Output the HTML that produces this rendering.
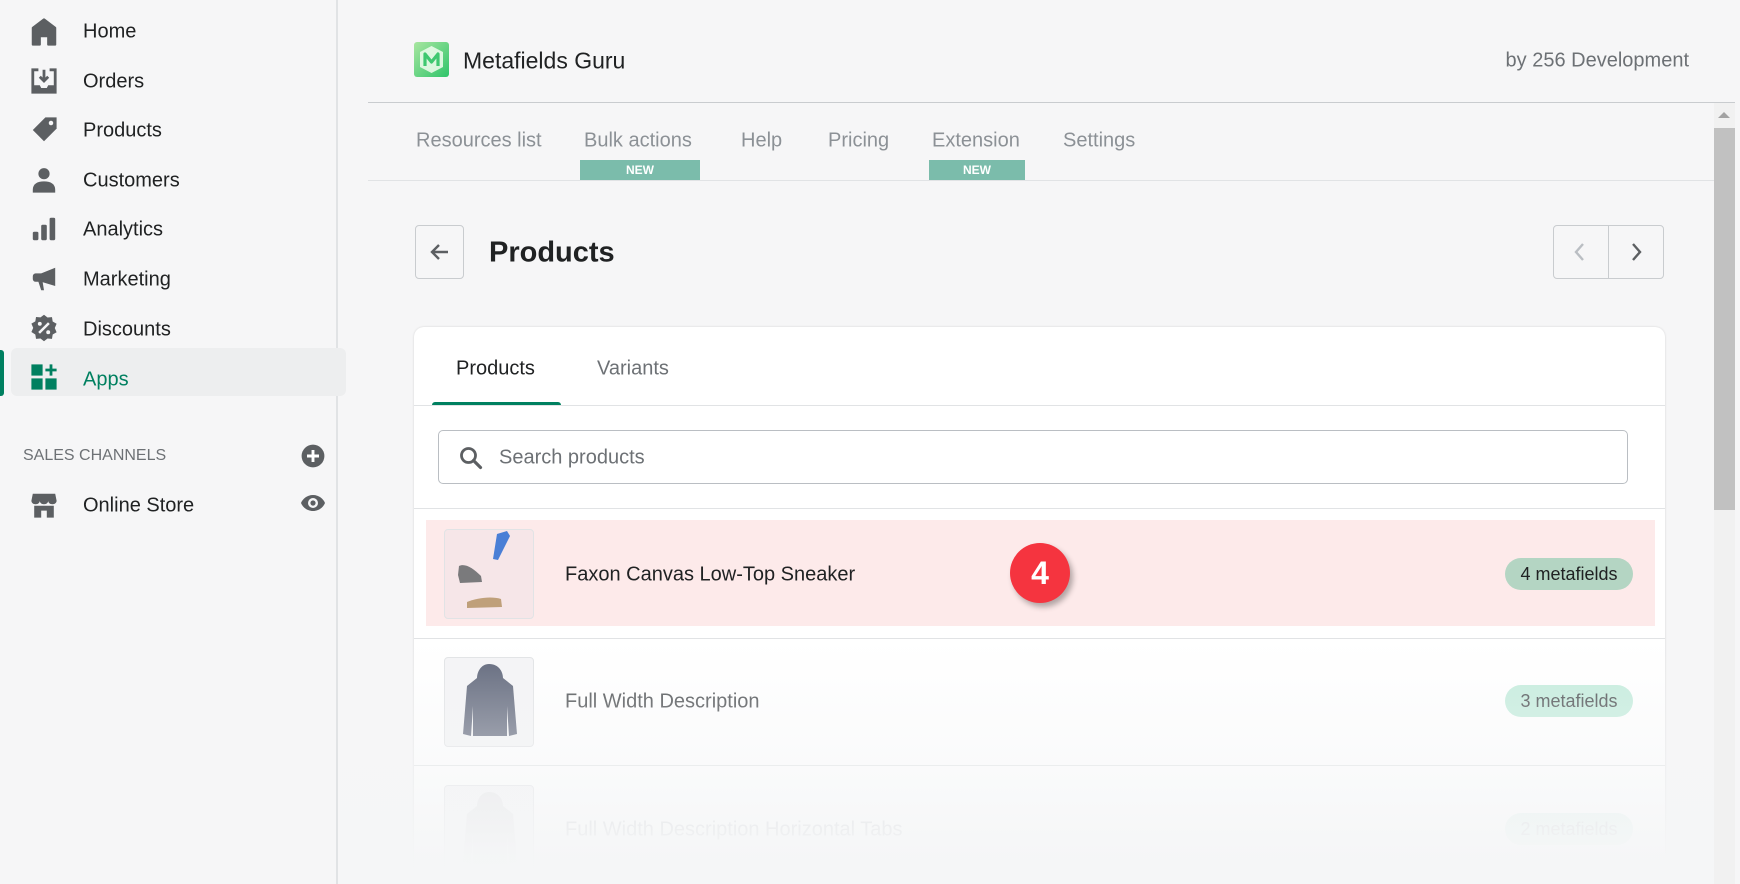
<!DOCTYPE html>
<html><head><meta charset="utf-8"><style>
*{box-sizing:border-box;margin:0;padding:0}
html,body{width:1740px;height:884px;overflow:hidden}
body{background:#f6f6f7;font-family:"Liberation Sans",sans-serif;color:#202223;position:relative}
.abs{position:absolute}
.nav{position:absolute;left:83px;font-size:20px;color:#202223;transform:translateY(-50%)}
.ic{position:absolute;left:30px;width:28px;height:28px;transform:translateY(-50%)}
.tab{position:absolute;top:141px;transform:translateY(-50%);font-size:20px;color:#8c9196}
.new{position:absolute;top:160px;height:20px;background:#7bbcab;color:#fff;font-size:12px;font-weight:bold;text-align:center;line-height:20px}
.row-t{position:absolute;left:565px;font-size:20px;transform:translateY(-50%)}
.badge{position:absolute;left:1505px;width:128px;height:32px;border-radius:16px;font-size:18px;text-align:center;line-height:32px}
.thumb{position:absolute;left:444px;width:90px;height:90px;border:1px solid #e1e3e5;border-radius:4px;background:#f4f4f6;overflow:hidden}
</style></head><body>
<!-- sidebar -->
<div class="abs" style="left:0;top:0;width:338px;height:884px;background:#f6f6f7;border-right:2px solid #e1e3e5"></div>
<div class="abs" style="left:11px;top:348px;width:335px;height:48px;background:#edeeef;border-radius:6px"></div>
<div class="abs" style="left:0;top:350px;width:4px;height:46px;background:#008060;border-radius:0 3px 3px 0"></div>

<svg class="ic" style="top:32px" viewBox="0 0 20 20"><path fill="#5c5f62" d="M10 1 L18 7 V19 H13 V13 H7 V19 H2 V7 Z" stroke="#5c5f62" stroke-linejoin="round" stroke-width="1.5"/></svg>
<div class="nav" style="top:32px">Home</div>
<svg class="ic" style="top:81px" viewBox="0 0 20 20"><path fill="none" stroke="#5c5f62" stroke-width="2" d="M6 2H2V18H18V2H14"/><path fill="#5c5f62" d="M2 13H7l1 2h4l1-2h5v5H2z"/><path stroke="#5c5f62" stroke-width="2" fill="none" d="M10 2v8M7 7l3 3 3-3"/></svg>
<div class="nav" style="top:82px">Orders</div>
<svg class="ic" style="top:130px" viewBox="0 0 20 20"><path fill="#5c5f62" d="M11 1H19V9L10 18 2 10Z"/><circle cx="15" cy="5" r="1.6" fill="#f6f6f7"/></svg>
<div class="nav" style="top:131px">Products</div>
<svg class="ic" style="top:180px" viewBox="0 0 20 20"><circle cx="10" cy="5.5" r="4" fill="#5c5f62"/><path fill="#5c5f62" d="M2 17c0-4 3-6 8-6s8 2 8 6v2H2z"/></svg>
<div class="nav" style="top:181px">Customers</div>
<svg class="ic" style="top:229px" viewBox="0 0 20 20"><rect x="2" y="12" width="4" height="6" rx="1" fill="#5c5f62"/><rect x="8" y="7" width="4" height="11" rx="1" fill="#5c5f62"/><rect x="14" y="2" width="4" height="16" rx="1" fill="#5c5f62"/></svg>
<div class="nav" style="top:230px">Analytics</div>
<svg class="ic" style="top:279px" viewBox="0 0 20 20"><path fill="#5c5f62" d="M18 2V15L8 12H4a2 2 0 0 1-2-2V8a2 2 0 0 1 2-2h4zM6 12h3l1 6H8z"/></svg>
<div class="nav" style="top:280px">Marketing</div>
<svg class="ic" style="top:328px" viewBox="0 0 20 20"><path fill="#5c5f62" d="M10 0.5l2.5 2 3.2-.3.5 3.2 2.8 1.6-1.3 3 1.3 3-2.8 1.6-.5 3.2-3.2-.3-2.5 2-2.5-2-3.2.3-.5-3.2L1 12.9l1.3-3L1 6.9 3.8 5.3l.5-3.2 3.2.3z"/><path stroke="#f6f6f7" stroke-width="1.8" d="M6.5 13.5l7-7"/><circle cx="7" cy="7" r="1.4" fill="#f6f6f7"/><circle cx="13" cy="13" r="1.4" fill="#f6f6f7"/></svg>
<div class="nav" style="top:330px">Discounts</div>
<svg class="ic" style="top:377px" viewBox="0 0 20 20"><rect x="1" y="1" width="8" height="8" fill="#008060"/><rect x="1" y="11" width="8" height="8" fill="#008060"/><rect x="11" y="11" width="8" height="8" fill="#008060"/><path stroke="#008060" stroke-width="2" d="M15 1v8M11 5h8"/></svg>
<div class="nav" style="top:380px;color:#008060">Apps</div>

<div class="abs" style="left:23px;top:456px;transform:translateY(-50%);font-size:16px;color:#6d7175">SALES CHANNELS</div>
<svg class="abs" style="left:301px;top:444px" width="24" height="24" viewBox="0 0 20 20"><circle cx="10" cy="10" r="9.5" fill="#5c5f62"/><path stroke="#fff" stroke-width="2.4" d="M10 5v10M5 10h10"/></svg>
<svg class="ic" style="top:505px" viewBox="0 0 20 20"><path fill="#5c5f62" d="M2 2h16l1 5c0 1.5-1.3 2.5-3 2.5S13 8.5 13 7c0 1.5-1.3 2.5-3 2.5S7 8.5 7 7c0 1.5-1.3 2.5-3 2.5S1 8.5 1 7z"/><path fill="#5c5f62" d="M3 10.5h14V19h-5v-5H8v5H3z"/></svg>
<div class="nav" style="top:506px">Online Store</div>
<svg class="abs" style="left:300px;top:493px" width="26" height="20" viewBox="0 0 26 20"><path fill="#5c5f62" d="M13 2C7 2 2.5 6 1 10c1.5 4 6 8 12 8s10.5-4 12-8C23.5 6 19 2 13 2z"/><circle cx="13" cy="10" r="5" fill="#f6f6f7"/><circle cx="13" cy="10" r="2.6" fill="#5c5f62"/></svg>

<!-- header -->
<svg class="abs" style="left:414px;top:42px" width="35" height="35" viewBox="0 0 35 35"><defs><linearGradient id="g" x1="0" y1="0" x2="1" y2="1"><stop offset="0" stop-color="#a8e6a0"/><stop offset="1" stop-color="#2fc46a"/></linearGradient></defs><rect width="35" height="35" rx="3" fill="url(#g)"/><path d="M17.5 4 L29 10 V25 L17.5 31 L6 25 V10 Z" fill="#e9fbe9" opacity=".9"/><path d="M11 24V12l6.5 8 6.5-8v12" fill="none" stroke="#3fc870" stroke-width="3.2" stroke-linejoin="round"/></svg>
<div class="abs" style="left:463px;top:61px;transform:translateY(-50%);font-size:23px;color:#202223">Metafields Guru</div>
<div class="abs" style="right:51px;top:61px;transform:translateY(-50%);font-size:20px;color:#6d7175">by 256 Development</div>
<div class="abs" style="left:368px;top:102px;width:1367px;height:1px;background:#c9cccf"></div>

<!-- scrollbar -->
<div class="abs" style="left:1714px;top:103px;width:21px;height:781px;background:#f1f1f1"></div>
<div class="abs" style="left:1718px;top:112px;width:0;height:0;border-left:6px solid transparent;border-right:6px solid transparent;border-bottom:6px solid #a3a3a3"></div>
<div class="abs" style="left:1714px;top:128px;width:21px;height:382px;background:#c1c1c1"></div>

<!-- tabs -->
<div class="tab" style="left:416px">Resources list</div>
<div class="tab" style="left:584px">Bulk actions</div>
<div class="tab" style="left:741px">Help</div>
<div class="tab" style="left:828px">Pricing</div>
<div class="tab" style="left:932px">Extension</div>
<div class="tab" style="left:1063px">Settings</div>
<div class="new" style="left:580px;width:120px">NEW</div>
<div class="new" style="left:929px;width:96px">NEW</div>
<div class="abs" style="left:368px;top:180px;width:1346px;height:1px;background:#e1e3e5"></div>

<!-- page title -->
<div class="abs" style="left:415px;top:225px;width:49px;height:54px;border:1px solid #c9cccf;border-radius:4px;background:#f6f6f7"></div>
<svg class="abs" style="left:428px;top:240px" width="24" height="24" viewBox="0 0 24 24"><path d="M20 12H5M11 5l-7 7 7 7" fill="none" stroke="#5c5f62" stroke-width="2.4"/></svg>
<div class="abs" style="left:489px;top:253px;transform:translateY(-50%);font-size:29px;font-weight:bold;color:#202223">Products</div>
<div class="abs" style="left:1553px;top:225px;width:111px;height:54px;border:1px solid #c9cccf;border-radius:4px;background:#f6f6f7"></div>
<div class="abs" style="left:1608px;top:225px;width:1px;height:54px;background:#c9cccf"></div>
<svg class="abs" style="left:1570px;top:241px" width="20" height="22" viewBox="0 0 20 22"><path d="M13 3l-7 8 7 8" fill="none" stroke="#babec3" stroke-width="2.4"/></svg>
<svg class="abs" style="left:1626px;top:241px" width="20" height="22" viewBox="0 0 20 22"><path d="M7 3l7 8-7 8" fill="none" stroke="#5c5f62" stroke-width="2.4"/></svg>

<!-- card -->
<div class="abs" style="left:414px;top:327px;width:1251px;height:557px;background:#fff;border-radius:10px 10px 0 0;box-shadow:0 0 2px rgba(0,0,0,.15)"></div>
<div class="abs" style="left:456px;top:369px;transform:translateY(-50%);font-size:20px;color:#202223">Products</div>
<div class="abs" style="left:597px;top:369px;transform:translateY(-50%);font-size:20px;color:#6d7175">Variants</div>
<div class="abs" style="left:432px;top:402px;width:129px;height:4px;background:#008060;border-radius:3px 3px 0 0"></div>
<div class="abs" style="left:414px;top:405px;width:1251px;height:1px;background:#e1e3e5"></div>
<div class="abs" style="left:438px;top:430px;width:1190px;height:54px;border:1px solid #babec3;border-radius:5px"></div>
<svg class="abs" style="left:458px;top:445px" width="26" height="26" viewBox="0 0 26 26"><circle cx="10.5" cy="10.5" r="7" fill="none" stroke="#5c5f62" stroke-width="2.8"/><path d="M15.5 15.5l7 7" stroke="#5c5f62" stroke-width="3.2" stroke-linecap="round"/></svg>
<div class="abs" style="left:499px;top:458px;transform:translateY(-50%);font-size:20px;color:#6d7175">Search products</div>
<div class="abs" style="left:414px;top:508px;width:1251px;height:1px;background:#e1e3e5"></div>

<!-- row1 -->
<div class="abs" style="left:426px;top:520px;width:1229px;height:106px;background:#fdeaea"></div>
<div class="thumb" style="top:529px;background:#f6e6e8">
<svg width="88" height="88" viewBox="0 0 88 88"><path d="M52 4l10-3 3 5-12 24-5-1z" fill="#4a7fd6"/><path d="M14 36c6-3 14 2 22 10l1 6-22 1-2-8z" fill="#7a7a7c"/><path d="M22 72c10-4 24-6 34-3l1 8-35 1z" fill="#bfa07a"/></svg></div>
<div class="row-t" style="top:575px">Faxon Canvas Low-Top Sneaker</div>
<div class="abs" style="left:1010px;top:543px;width:60px;height:60px;border-radius:50%;background:#f5343f;box-shadow:3px 4px 6px rgba(0,0,0,.3);color:#fff;font-size:32px;font-weight:bold;text-align:center;line-height:60px">4</div>
<div class="badge" style="top:558px;background:#b4d5c3;color:#202223">4 metafields</div>
<div class="abs" style="left:414px;top:638px;width:1251px;height:1px;background:#e1e3e5"></div>

<!-- row2 -->
<div class="thumb" style="top:657px">
<svg width="88" height="88" viewBox="0 0 88 88"><path d="M44 6c-8 0-12 8-12 14l-10 8-4 48 8 2 2-30 0 30h34l0-30 2 30 8-2-4-48-10-8c0-6-4-14-14-14z" fill="#5d6478"/></svg></div>
<div class="row-t" style="top:702px;color:#4a4d50">Full Width Description</div>
<div class="badge" style="top:685px;background:#c3ecdc;color:#4a4d50">3 metafields</div>
<div class="abs" style="left:414px;top:765px;width:1251px;height:1px;background:#e1e3e5"></div>

<!-- row3 -->
<div class="thumb" style="top:785px">
<svg width="88" height="88" viewBox="0 0 88 88"><path d="M44 6c-8 0-12 8-12 14l-10 8-4 48 8 2 2-30 0 30h34l0-30 2 30 8-2-4-48-10-8c0-6-4-14-14-14z" fill="#e4e4e6"/></svg></div>
<div class="row-t" style="top:830px;color:#c9cccf">Full Width Description Horizontal Tabs</div>
<div class="badge" style="top:813px;background:#e3f3ee;color:#c9cccf">2 metafields</div>

<!-- fade overlay -->
<div class="abs" style="left:340px;top:640px;width:1374px;height:244px;background:linear-gradient(to bottom,rgba(245,246,247,0) 0%,rgba(245,246,247,.55) 55%,rgba(245,246,247,.97) 88%,#f5f6f7 100%)"></div>
</body></html>
